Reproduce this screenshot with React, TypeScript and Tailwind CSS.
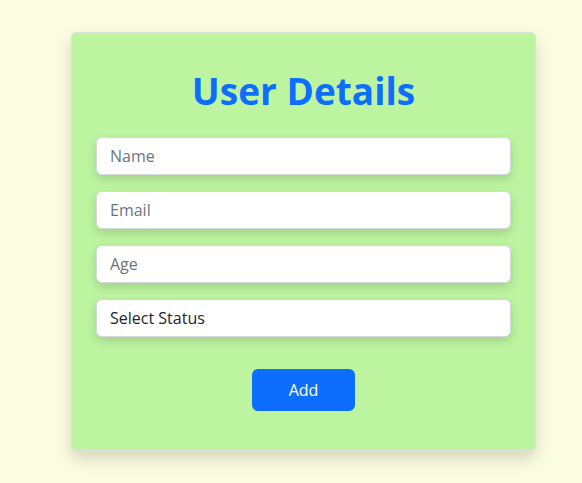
import React, { useState } from "react";

const App = () => {
  const [name, setName] = useState("");
  const [email, setEmail] = useState("");
  const [age, setAge] = useState("");
  const [status, setStatus] = useState("");

  const fieldClass =
    "w-full h-[38px] rounded-md border border-[#d6d9dd] bg-white px-[13px] text-base text-[#212529] placeholder:text-[#6c757d] shadow-[0_4px_10px_rgba(0,0,0,0.15)] outline-none";

  return (
    <div
      className="min-h-screen bg-[#fafddf] pt-8 pl-[71px]"
      style={{ fontFamily: '"Open Sans", "Noto Sans", sans-serif' }}
    >
      <div className="w-[465px] h-[419px] rounded-[5px] border border-[#dde3d8] bg-[#bdf4a0] px-[24px] pt-[30px] shadow-[0_8px_16px_rgba(0,0,0,0.15)]">
        {/* Title */}
        <h1 className="text-center text-[37px] font-bold leading-[56px] text-[#0d6efd]">
          User Details
        </h1>

        {/* Form fields */}
        <div className="mt-[18px] flex flex-col gap-4">
          <input
            className={fieldClass}
            placeholder="Name"
            value={name}
            onChange={(e) => setName(e.target.value)}
          />
          <input
            className={fieldClass}
            placeholder="Email"
            value={email}
            onChange={(e) => setEmail(e.target.value)}
          />
          <input
            className={fieldClass}
            placeholder="Age"
            value={age}
            onChange={(e) => setAge(e.target.value)}
          />
          <select
            className={`${fieldClass} appearance-none`}
            value={status}
            onChange={(e) => setStatus(e.target.value)}
          >
            <option value="">Select Status</option>
            <option value="active">Active</option>
            <option value="inactive">Inactive</option>
          </select>
        </div>

        <div className="mt-[32px] flex justify-center">
          <button className="h-[42px] w-[103px] rounded-md bg-[#0d6efd] text-base text-white">
            Add
          </button>
        </div>
      </div>
    </div>
  );
};

export default App;
